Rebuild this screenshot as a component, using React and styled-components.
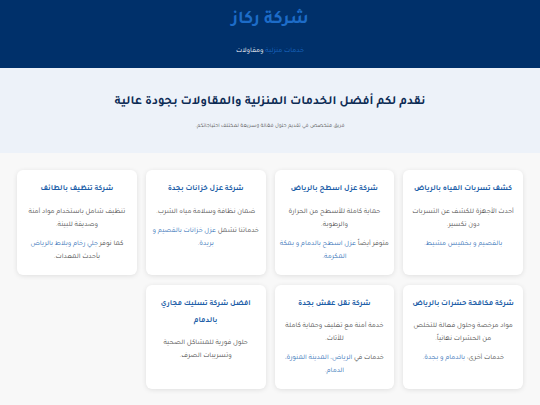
import styled, { createGlobalStyle } from "styled-components";

const GlobalStyle = createGlobalStyle`
  * { box-sizing: border-box; }
  body {
    margin: 0;
    background: #f8f8f8;
    font-family: Tajawal, "Noto Sans Arabic", "DejaVu Sans", sans-serif;
  }
`;

// line breaks follow the original layout
const services = [
  {
    title: "كشف تسربات المياه بالرياض",
    text: "أحدث الأجهزة للكشف عن التسربات\nدون تكسير.",
    extra: [{ link: "بالقصيم و بخميس مشيط." }],
  },
  {
    title: "شركة عزل اسطح بالرياض",
    text: "حماية كاملة للأسطح من الحرارة\nوالرطوبة.",
    extra: [{ plain: "متوفر أيضاً " }, { link: "عزل اسطح بالدمام و بمكة\nالمكرمة." }],
  },
  {
    title: "شركة عزل خزانات بجدة",
    text: "ضمان نظافة وسلامة مياه الشرب.",
    extra: [{ plain: "خدماتنا تشمل " }, { link: "عزل خزانات بالقصيم و\nبريدة." }],
  },
  {
    title: "شركة تنظيف بالطائف",
    text: "تنظيف شامل باستخدام مواد آمنة\nوصديقة للبيئة.",
    extra: [{ plain: "كما نوفر " }, { link: "جلي رخام وبلاط بالرياض" }, { plain: "\nبأحدث المعدات." }],
  },
  {
    title: "شركة مكافحة حشرات بالرياض",
    text: "مواد مرخصة وحلول فعالة للتخلص\nمن الحشرات نهائياً.",
    extra: [{ plain: "خدمات أخرى: " }, { link: "بالدمام و بجدة." }],
  },
  {
    title: "شركة نقل عفش بجدة",
    text: "خدمة آمنة مع تغليف وحماية كاملة\nللأثاث.",
    extra: [{ plain: "خدمات في " }, { link: "الرياض، المدينة المنورة،\nالدمام." }],
  },
  {
    title: "افضل شركة تسليك مجاري\nبالدمام",
    text: "حلول فورية للمشاكل الصحية\nوتسريبات الصرف.",
    extra: [],
  },
];

export default function App() {
  return (
    <>
      <GlobalStyle />
      <Page dir="rtl">
        <Header>
          <Brand>شركة ركاز</Brand>
          <Tagline>
            <span>خدمات منزلية</span> ومقاولات
          </Tagline>
        </Header>
        <Hero>
          <HeroTitle>نقدم لكم أفضل الخدمات المنزلية والمقاولات بجودة عالية</HeroTitle>
          <HeroText>فريق متخصص في تقديم حلول فعّالة وسريعة لمختلف احتياجاتكم.</HeroText>
        </Hero>
        <Services>
          {services.map((s, i) => (
            <Card key={i}>
              <CardTitle>{s.title}</CardTitle>
              <CardText>{s.text}</CardText>
              {s.extra.length > 0 && (
                <CardText>
                  {s.extra.map((p, j) =>
                    p.link ? <CardLink key={j}>{p.link}</CardLink> : <span key={j}>{p.plain}</span>
                  )}
                </CardText>
              )}
            </Card>
          ))}
        </Services>
      </Page>
    </>
  );
}

const Page = styled.div`
  width: 540px;
  min-height: 405px;
`;

const Header = styled.header`
  background: #00306a;
  height: 68px;
  display: flex;
  flex-direction: column;
  align-items: center;
  padding-top: 8px;
`;

const Brand = styled.h1`
  margin: 0;
  font-size: 18px;
  font-weight: 700;
  color: #1d6cc8;
  line-height: 24px;
`;

const Tagline = styled.p`
  margin: 13px 0 0;
  font-size: 7.1px;
  line-height: 12px;
  color: #ffffff;
  span {
    color: #1d6cc8;
  }
`;

const Hero = styled.section`
  background: #edf2f9;
  height: 85px;
  display: flex;
  flex-direction: column;
  align-items: center;
  padding-top: 24px;
`;

const HeroTitle = styled.h2`
  margin: 0;
  font-size: 12.6px;
  font-weight: 700;
  color: #0d2c55;
  line-height: 20px;
`;

const HeroText = styled.p`
  margin: 9px 0 0;
  font-size: 5.6px;
  line-height: 10px;
  color: #555;
`;

const Services = styled.section`
  display: grid;
  grid-template-columns: repeat(4, 1fr);
  gap: 10px 9px;
  padding: 17px 17px 16px;
`;

const Card = styled.div`
  background: #fff;
  border-radius: 6px;
  box-shadow: 0 1px 5px rgba(0, 0, 0, 0.1);
  padding: 11px 3px 11px;
  text-align: center;
  white-space: pre;
`;

const CardTitle = styled.h3`
  margin: 0 0 7.5px;
  font-size: 7.6px;
  font-weight: 700;
  color: #1f5fa8;
  line-height: 17px;
`;

const CardText = styled.p`
  margin: 0 0 6px;
  font-size: 7.1px;
  line-height: 13px;
  color: #484848;
  &:last-child {
    margin-bottom: 0;
  }
`;

const CardLink = styled.a`
  color: #2d6db5;
  text-decoration: none;
`;
